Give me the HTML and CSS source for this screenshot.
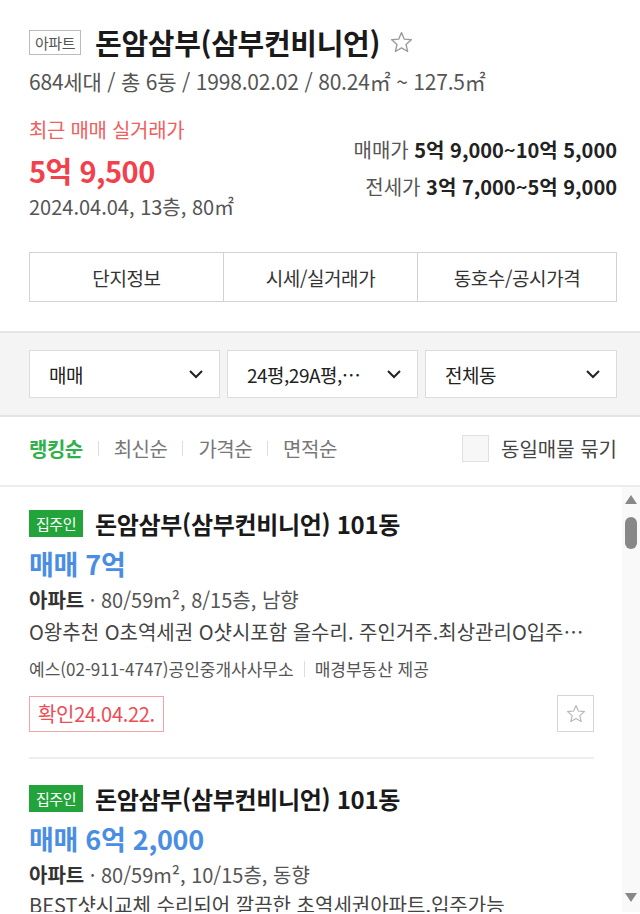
FILE: index.html
```html
<!DOCTYPE html>
<html lang="ko">
<head>
<meta charset="utf-8">
<link rel="stylesheet" href="styles.css">
</head>
<body>
<div class="page">
  <section class="header">
    <div class="title-row">
      <span class="type-tag">아파트</span>
      <h1 class="title">돈암삼부(삼부컨비니언)</h1>
      <svg class="title-star" viewBox="0 0 24 24" width="25" height="25"><path d="M12 2.5l2.7 6.3 6.8.6-5.2 4.5 1.6 6.7L12 17.1l-5.9 3.5 1.6-6.7-5.2-4.5 6.8-.6z" fill="none" stroke="#9a9a9a" stroke-width="1.3" stroke-linejoin="round"/></svg>
    </div>
    <p class="meta">684세대 / 총 6동 / 1998.02.02 / 80.24㎡ ~ 127.5㎡</p>
    <div class="summary">
      <div class="recent">
        <p class="recent-label">최근 매매 실거래가</p>
        <p class="recent-price">5억 9,500</p>
        <p class="recent-info">2024.04.04, 13층, 80㎡</p>
      </div>
      <div class="ranges">
        <p class="range"><span class="range-label">매매가</span> <b>5억 9,000~10억 5,000</b></p>
        <p class="range"><span class="range-label">전세가</span> <b>3억 7,000~5억 9,000</b></p>
      </div>
    </div>
    <div class="tabs">
      <div class="tab">단지정보</div>
      <div class="tab">시세/실거래가</div>
      <div class="tab">동호수/공시가격</div>
    </div>
  </section>

  <section class="filters">
    <div class="select"><span>매매</span><svg class="chev" viewBox="0 0 14 9" width="14" height="9"><path d="M1 1l6 6 6-6" fill="none" stroke="#222" stroke-width="2"/></svg></div>
    <div class="select"><span>24평,29A평,…</span><svg class="chev" viewBox="0 0 14 9" width="14" height="9"><path d="M1 1l6 6 6-6" fill="none" stroke="#222" stroke-width="2"/></svg></div>
    <div class="select"><span>전체동</span><svg class="chev" viewBox="0 0 14 9" width="14" height="9"><path d="M1 1l6 6 6-6" fill="none" stroke="#222" stroke-width="2"/></svg></div>
  </section>

  <section class="sortbar">
    <ul class="sorts">
      <li class="sort active">랭킹순</li>
      <li class="sort">최신순</li>
      <li class="sort">가격순</li>
      <li class="sort">면적순</li>
    </ul>
    <label class="group-check"><span class="box"></span>동일매물 묶기</label>
  </section>

  <section class="list-wrap">
    <div class="list">
      <article class="item">
        <div class="item-title"><span class="owner">집주인</span><span class="name">돈암삼부(삼부컨비니언) 101동</span></div>
        <p class="item-price">매매 7억</p>
        <p class="item-spec"><b>아파트</b> · 80/59m², 8/15층, 남향</p>
        <p class="item-desc">O왕추천 O초역세권 O샷시포함 올수리. 주인거주.최상관리O입주가능 O</p>
        <p class="item-agent">예스(02-911-4747)공인중개사사무소<span class="bar"></span>매경부동산 제공</p>
        <div class="item-foot">
          <span class="confirm">확인24.04.22.</span>
          <span class="fav"><svg viewBox="0 0 24 24" width="22" height="22"><path d="M12 2.8l2.6 6 6.6.6-5 4.4 1.5 6.5L12 16.9l-5.7 3.4 1.5-6.5-5-4.4 6.6-.6z" fill="none" stroke="#b5b5b5" stroke-width="1.2" stroke-linejoin="round"/></svg></span>
        </div>
      </article>
      <article class="item">
        <div class="item-title"><span class="owner">집주인</span><span class="name">돈암삼부(삼부컨비니언) 101동</span></div>
        <p class="item-price">매매 6억 2,000</p>
        <p class="item-spec"><b>아파트</b> · 80/59m², 10/15층, 동향</p>
        <p class="item-desc last">BEST샷시교체 수리되어 깔끔한 초역세권아파트.입주가능</p>
      </article>
    </div>
    <div class="scrollbar">
      <span class="arrow up"></span>
      <div class="track"><span class="thumb"></span></div>
      <span class="arrow down"></span>
    </div>
  </section>
</div>
</body>
</html>
```
FILE: styles.css
```css
* { box-sizing: border-box; }
html, body { margin: 0; padding: 0; background: #fff; }
body {
  font-family: "Noto Sans CJK KR", "Noto Sans", sans-serif;
  color: #222;
  width: 640px;
  height: 914px;
  overflow: hidden;
}
p { margin: 0; }
ul { margin: 0; padding: 0; list-style: none; }

.header { padding: 23px 23px 0 29px; }
.title-row { display: flex; align-items: center; height: 38px; }
.type-tag {
  border: 1px solid #bbb;
  color: #555;
  font-size: 15px;
  line-height: 23px;
  width: 52px;
  text-align: center;
  letter-spacing: -0.5px;
}
.title {
  margin: 0 0 0 14px;
  font-size: 29px;
  font-weight: 700;
  letter-spacing: -0.3px;
  color: #1a1a1a;
  line-height: 38px;
}
.title-star { margin-left: 9px; }
.meta { margin-top: 6px; font-size: 21px; color: #555; letter-spacing: -0.2px; line-height: 28px; }

.summary { display: flex; justify-content: space-between; margin-top: 21px; }
.recent-label { font-size: 20px; color: #ef6060; line-height: 28px; letter-spacing: -0.3px; }
.recent-price { font-size: 29px; font-weight: 700; color: #f2414c; line-height: 36px; margin-top: 8px; letter-spacing: -0.5px; }
.recent-info { font-size: 20px; color: #555; line-height: 28px; margin-top: 5px; letter-spacing: 0; }
.ranges { text-align: right; padding-top: 20px; }
.range { font-size: 20px; line-height: 28px; margin-bottom: 9px; color: #555; letter-spacing: 0; }
.range b { color: #222; font-weight: 700; }

.tabs {
  display: grid;
  grid-template-columns: 193px 194px 1fr;
  margin-top: 31px;
  border: 1px solid #d2d2d2;
  height: 50px;
}
.tab { display: flex; align-items: center; justify-content: center; font-size: 19px; color: #333; letter-spacing: -0.4px; }
.tab + .tab { border-left: 1px solid #d2d2d2; }

.filters {
  margin-top: 29px;
  background: #f4f4f4;
  border-top: 2px solid #e4e4e4;
  border-bottom: 2px solid #e4e4e4;
  padding: 17px 23px 17px 29px;
  display: grid;
  grid-template-columns: 191px 191px 1fr;
  gap: 7px;
}
.select {
  background: #fff;
  border: 1px solid #dcdcdc;
  height: 48px;
  display: flex;
  align-items: center;
  justify-content: space-between;
  padding: 0 16px 0 19px;
  font-size: 19px;
  color: #222;
  letter-spacing: -0.5px;
}
.select span { white-space: nowrap; overflow: hidden; }

.sortbar {
  display: flex;
  justify-content: space-between;
  align-items: center;
  height: 70px;
  padding: 0 23px 5px 29px;
  border-bottom: 2px solid #ececec;
}
.sorts { display: flex; align-items: center; }
.sort { font-size: 20px; color: #777; letter-spacing: -0.5px; display: flex; align-items: center; }
.sort + .sort::before { content: ""; width: 1px; height: 15px; background: #ddd; margin: 0 15px; }
.sort.active { color: #30b04a; font-weight: 700; }
.group-check { display: flex; align-items: center; font-size: 20px; color: #444; letter-spacing: 0; }
.box { width: 27px; height: 27px; border: 1px solid #e0e0e0; background: #f7f7f7; margin-right: 12px; }

.list-wrap { display: flex; height: 425px; overflow: hidden; }
.list { flex: 1; padding: 0 28px 0 29px; min-width: 0; }
.item { padding-top: 21px; }
.item + .item { border-top: 2px solid #eee; padding-top: 24px; }
.item-title { display: flex; align-items: center; height: 30px; }
.owner {
  background: #22a43b;
  color: #fff;
  font-size: 15px;
  line-height: 27px;
  width: 54px;
  text-align: center;
  letter-spacing: -0.5px;
}
.name { margin-left: 12px; font-size: 24px; font-weight: 700; color: #1a1a1a; letter-spacing: -0.3px; }
.item-price { margin-top: 9px; font-size: 27px; font-weight: 700; color: #4a8ee3; line-height: 34px; letter-spacing: -0.3px; }
.item-spec { margin-top: 5px; font-size: 20px; color: #555; line-height: 28px; letter-spacing: 0; }
.item-spec b { color: #333; font-weight: 700; }
.item-desc { margin-top: 4px; font-size: 20px; color: #444; line-height: 28px; white-space: nowrap; overflow: hidden; text-overflow: ellipsis; letter-spacing: 0; }
.item-desc.last { margin-top: 2px; }
.item-agent { margin-top: 11px; font-size: 17px; color: #555; line-height: 24px; letter-spacing: 0; display: flex; align-items: center; }
.bar { width: 1px; height: 16px; background: #ddd; margin: 0 10px; }
.item-foot { display: flex; justify-content: space-between; align-items: center; margin-top: 14px; padding-bottom: 25px; }
.confirm {
  border: 1px solid #f4a3a8;
  color: #ef4b55;
  font-size: 20px;
  line-height: 34px;
  padding: 0 8px;
  letter-spacing: -0.3px;
}
.fav { width: 37px; height: 37px; border: 1px solid #d5d5d5; display: flex; align-items: center; justify-content: center; }

.scrollbar { width: 18px; background: #f9f9f9; display: flex; flex-direction: column; align-items: center; padding: 8px 0 10px; }
.arrow { width: 0; height: 0; border-left: 6px solid transparent; border-right: 6px solid transparent; }
.arrow.up { border-bottom: 9px solid #888; }
.arrow.down { border-top: 9px solid #888; }
.track { flex: 1; width: 100%; padding-top: 13px; display: flex; justify-content: center; }
.thumb { width: 12px; height: 32px; background: #888; border-radius: 6px; }
```
